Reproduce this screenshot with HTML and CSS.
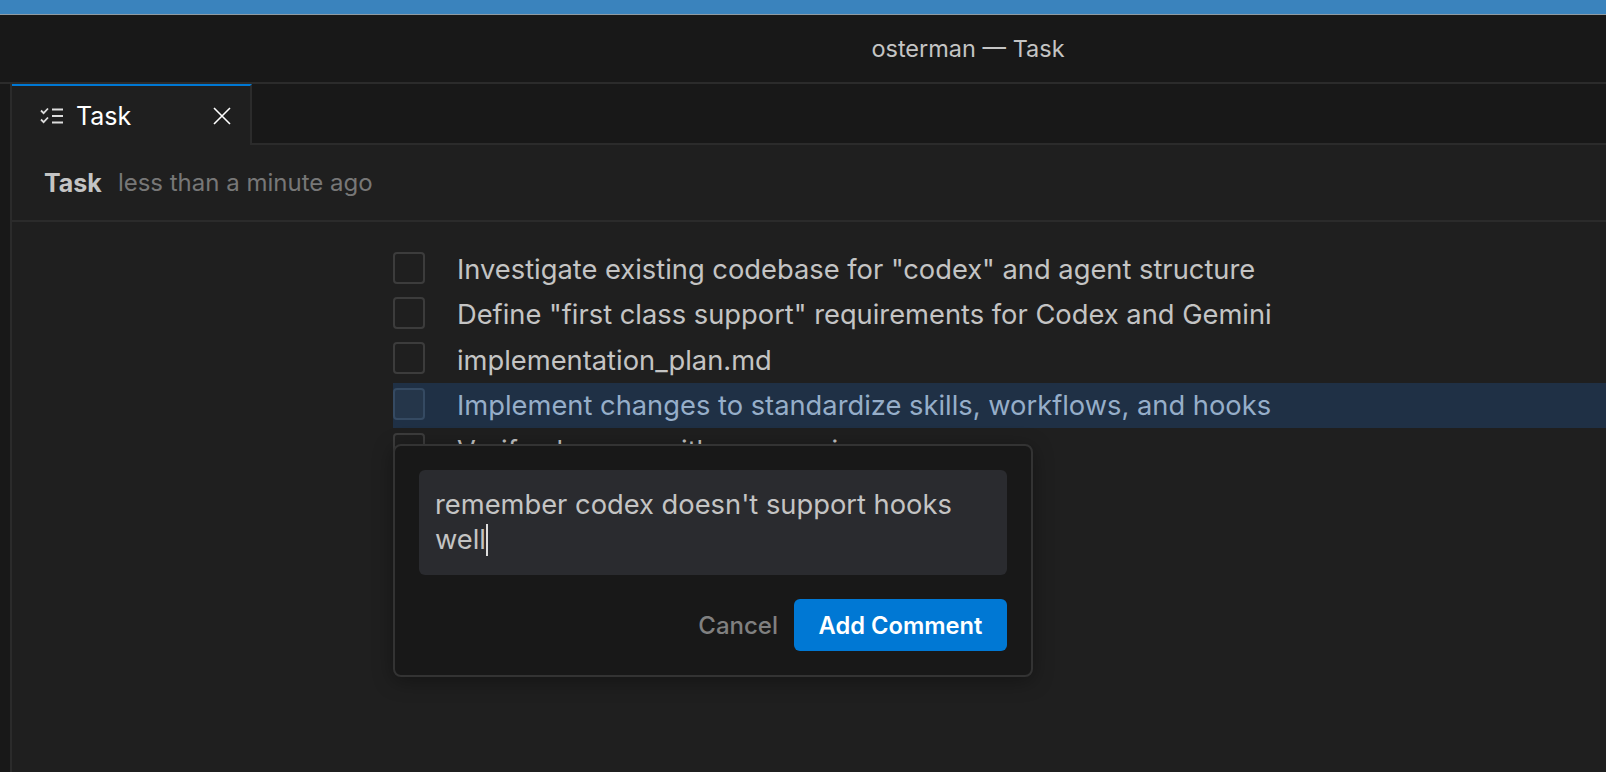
FILE: index.html
```html
<!DOCTYPE html>
<html lang="en">
<head>
<meta charset="utf-8">
<title>osterman — Task</title>
<link rel="stylesheet" href="styles.css">
</head>
<body>
<div class="desktop-strip"></div>
<div class="window">
  <header class="titlebar">osterman — Task</header>
  <div class="workbench">
    <aside class="sidebar"></aside>
    <main class="editor">
      <div class="tabbar">
        <div class="tab">
          <svg class="tab-icon" viewBox="0 0 24 20" width="24" height="20" fill="none" stroke="currentColor" stroke-width="1.8">
            <path d="M1 4.500l2.600 2.600L8 2.500"/>
            <path d="M1 13.500l2.600 2.600L8 11.500"/>
            <path d="M12 3.500h11M12 10h11M12 16.500h11"/>
          </svg>
          <span class="tab-label">Task</span>
          <svg class="tab-close" viewBox="0 0 18 18" width="18" height="18" fill="none" stroke="currentColor" stroke-width="1.600">
            <path d="M1 1l16 16M17 1L1 17"/>
          </svg>
        </div>
        <div class="tabbar-rest"></div>
      </div>
      <div class="doc-header">
        <span class="doc-title">Task</span>
        <span class="doc-time">less than a minute ago</span>
      </div>
      <div class="doc-body">
        <ul class="checklist">
          <li class="item"><span class="box"></span><span>Investigate existing codebase for "codex" and agent structure</span></li>
          <li class="item"><span class="box"></span><span>Define "first class support" requirements for Codex and Gemini</span></li>
          <li class="item"><span class="box"></span><span>implementation_plan.md</span></li>
          <li class="item selected"><span class="box"></span><span>Implement changes to standardize skills, workflows, and hooks</span></li>
          <li class="item"><span class="box"></span><span>Verify changes with a scenario</span></li>
        </ul>
        <div class="comment-popup">
          <div class="comment-input">remember codex doesn't support hooks well<span class="caret"></span></div>
          <div class="comment-actions">
            <span class="cancel">Cancel</span>
            <span class="add">Add Comment</span>
          </div>
        </div>
      </div>
    </main>
  </div>
</div>
</body>
</html>
```
FILE: styles.css
```css
* { box-sizing: border-box; }
html, body { margin: 0; height: 100%; overflow: hidden; }
body {
  background: #1f1f1f;
  font-family: Inter, "Liberation Sans", sans-serif;
  display: flex;
  flex-direction: column;
}
.desktop-strip {
  height: 15px;
  flex: none;
  background: #3a83bd;
  border-bottom: 1px solid #8f9ba3;
}
.window { flex: 1; display: flex; flex-direction: column; min-height: 0; }
.titlebar {
  height: 69px;
  flex: none;
  background: #181818;
  border-bottom: 2px solid #2b2b2b;
  color: #c4c4c4;
  font-size: 23.500px;
  display: flex;
  align-items: center;
  justify-content: center;
  padding: 0 0 0 330px;
}
.workbench { flex: 1; display: flex; min-height: 0; }
.sidebar { width: 12px; flex: none; background: #181818; border-right: 2px solid #2b2b2b; }
.editor { flex: 1; display: flex; flex-direction: column; min-width: 0; }
.tabbar { height: 61px; flex: none; display: flex; }
.tab {
  width: 240px;
  flex: none;
  background: #1f1f1f;
  border-top: 2px solid #0078d4;
  border-right: 2px solid #2b2b2b;
  display: flex;
  align-items: center;
  padding: 0 18px 0 28px;
  color: #ffffff;
}
.tab-icon { color: #dddddd; flex: none; }
.tab-label { font-size: 25px; margin-left: 12px; flex: 1; }
.tab-close { flex: none; margin-left: -1px; margin-right: 1px; }
.tabbar-rest { flex: 1; background: #181818; border-bottom: 2px solid #2b2b2b; }
.doc-header {
  height: 77px;
  flex: none;
  border-bottom: 2px solid #2b2b2b;
  display: flex;
  align-items: center;
  gap: 16px;
  padding-left: 32px;
}
.doc-title { font-size: 25px; font-weight: 700; color: #c4c4c4; }
.doc-time { font-size: 24px; color: #777777; }
.doc-body { flex: 1; position: relative; min-height: 0; padding: 25px 0 0 381px; overflow: hidden; }
.checklist { list-style: none; margin: 0; padding: 0; }
.item {
  height: 45.330px;
  display: flex;
  align-items: center;
  gap: 32px;
  font-size: 27.300px;
  color: #c4c4c4;
}
.box {
  width: 32px;
  height: 32px;
  flex: none;
  margin-bottom: 4px;
  border: 2px solid #3c3c3c;
  border-radius: 4px;
  background: #1f1f1f;
}
.selected { background: #1f3045; color: #96aec9; }
.selected .box { background: #25364a; border-color: #354a62; }
.comment-popup {
  position: absolute;
  left: 381px;
  top: 222px;
  width: 640px;
  height: 233px;
  background: #181818;
  border: 2px solid #333333;
  border-radius: 8px;
  box-shadow: 0 4px 20px rgba(0, 0, 0, 0.35);
  padding: 24px 24px 0;
}
.comment-input {
  height: 105px;
  background: #2a2b2f;
  border-radius: 6px;
  padding: 17px 16px 0;
  font-size: 27.300px;
  line-height: 35px;
  color: #c4c4c4;
}
.caret {
  display: inline-block;
  width: 2px;
  height: 32px;
  background: #dddddd;
  vertical-align: text-bottom;
}
.comment-actions {
  margin-top: 24px;
  display: flex;
  justify-content: flex-end;
  align-items: center;
  gap: 16px;
}
.cancel { font-size: 24px; font-weight: 500; color: #808080; }
.add {
  width: 213px;
  height: 52px;
  background: #0078d4;
  border-radius: 6px;
  color: #ffffff;
  font-size: 23.700px;
  font-weight: 600;
  display: flex;
  align-items: center;
  justify-content: center;
}
```
